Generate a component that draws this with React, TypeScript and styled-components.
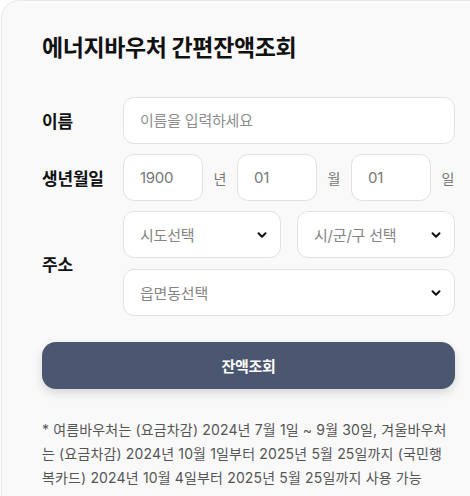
import React from 'react';
import styled, { createGlobalStyle } from 'styled-components';
import { ChevronDown } from 'lucide-react';

const FONT_STACK = `Inter, "Noto Sans CJK KR", "Noto Sans", sans-serif`;
const FIELD_HEIGHT_PX = 47;

const GlobalStyle = createGlobalStyle`
  html,
  body {
    background: #ffffff;
    margin: 0;
    overflow: hidden;
  }

  body {
    font-family: ${FONT_STACK};
  }
`;

const StyledCard = styled.section`
  background: #f9f9f9;
  border: 1px solid #e8e8e8;
  border-radius: 18px;
  box-sizing: border-box;
  margin: 0 0 0 1px;
  padding: 34px 40px 40px;
  width: 495px;
`;

const StyledTitle = styled.h1`
  color: #111111;
  font-size: 23px;
  font-weight: 700;
  letter-spacing: -0.4px;
  line-height: 26px;
  margin: 0 0 36px;
`;

const StyledForm = styled.form`
  display: flex;
  flex-direction: column;
  gap: 10px;
`;

const StyledRow = styled.div`
  align-items: center;
  display: grid;
  grid-template-columns: 81px 1fr;
`;

const StyledLabel = styled.label`
  color: #111111;
  font-size: 17px;
  font-weight: 700;
  letter-spacing: -0.2px;
`;

const StyledInput = styled.input`
  background: #ffffff;
  border: 1px solid #e2e2e2;
  border-radius: 11px;
  box-sizing: border-box;
  color: #777777;
  font-family: ${FONT_STACK};
  font-size: 15px;
  height: ${FIELD_HEIGHT_PX}px;
  letter-spacing: -0.3px;
  min-width: 0;
  outline: none;
  padding: 0 16px;
  width: 100%;

  &::placeholder {
    color: #8e8e8e;
    letter-spacing: -0.2px;
  }
`;

const StyledDateGroup = styled.div`
  align-items: center;
  display: flex;
  gap: 10px;

  ${StyledInput} {
    flex: 1;
  }
`;

const StyledUnit = styled.span`
  color: #777777;
  font-size: 14px;
  text-align: center;
  width: 14px;
`;

const StyledSelectGrid = styled.div`
  display: grid;
  gap: 11px 16px;
  grid-template-columns: 1fr 1fr;
`;

const StyledSelect = styled.div<{ $wide?: boolean }>`
  align-items: center;
  background: #ffffff;
  border: 1px solid #e2e2e2;
  border-radius: 11px;
  box-sizing: border-box;
  color: #858585;
  display: flex;
  font-size: 15px;
  grid-column: ${({ $wide }) => ($wide ? '1 / -1' : 'auto')};
  height: ${FIELD_HEIGHT_PX}px;
  justify-content: space-between;
  letter-spacing: -0.2px;
  padding: 0 11px 0 16px;

  svg {
    color: #111111;
  }
`;

const StyledButton = styled.button`
  background: #4b5670;
  border: none;
  border-radius: 14px;
  box-shadow: 0 4px 10px rgba(0, 0, 0, 0.14);
  color: #ffffff;
  font-family: ${FONT_STACK};
  font-size: 15px;
  font-weight: 700;
  height: ${FIELD_HEIGHT_PX}px;
  letter-spacing: -0.3px;
  margin-top: 16px;
  width: 100%;
`;

const StyledNote = styled.p`
  color: #555555;
  font-size: 14px;
  letter-spacing: 0.15px;
  line-height: 24px;
  margin: 29px 0 0;
`;

const SelectBox: React.FC<{ label: string; wide?: boolean }> = ({ label, wide }) => (
  <StyledSelect $wide={wide}>
    <span>{label}</span>
    <ChevronDown size={14} strokeWidth={3.4} />
  </StyledSelect>
);

const App: React.FC = () => {
  return (
    <>
      <GlobalStyle />
      <StyledCard>
        <StyledTitle>에너지바우처 간편잔액조회</StyledTitle>
        <StyledForm onSubmit={(e) => e.preventDefault()}>
          <StyledRow>
            <StyledLabel htmlFor="name">이름</StyledLabel>
            <StyledInput id="name" placeholder="이름을 입력하세요" />
          </StyledRow>
          <StyledRow>
            <StyledLabel>생년월일</StyledLabel>
            <StyledDateGroup>
              <StyledInput defaultValue="1900" />
              <StyledUnit>년</StyledUnit>
              <StyledInput defaultValue="01" />
              <StyledUnit>월</StyledUnit>
              <StyledInput defaultValue="01" />
              <StyledUnit>일</StyledUnit>
            </StyledDateGroup>
          </StyledRow>
          <StyledRow>
            <StyledLabel>주소</StyledLabel>
            <StyledSelectGrid>
              <SelectBox label="시도선택" />
              <SelectBox label="시/군/구 선택" />
              <SelectBox label="읍면동선택" wide />
            </StyledSelectGrid>
          </StyledRow>
          <StyledButton type="submit">잔액조회</StyledButton>
        </StyledForm>
        <StyledNote>
          * 여름바우처는 (요금차감) 2024년 7월 1일 ~ 9월 30일, 겨울바우처는 (요금차감) 2024년
          10월 1일부터 2025년 5월 25일까지 (국민행복카드) 2024년 10월 4일부터 2025년 5월
          25일까지 사용 가능
        </StyledNote>
      </StyledCard>
    </>
  );
};

export default App;
